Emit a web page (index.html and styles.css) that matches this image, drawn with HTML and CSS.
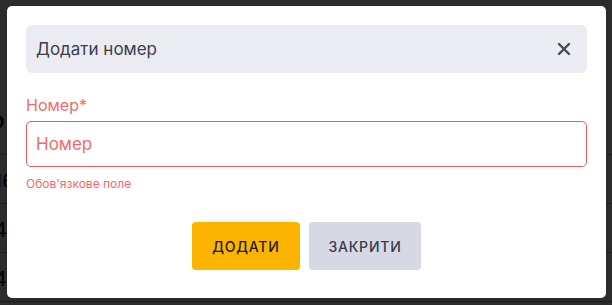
FILE: index.html
```html
<!DOCTYPE html>
<html lang="uk">
<head>
    <meta charset="UTF-8">
    <meta name="viewport" content="width=device-width, initial-scale=1.0">
    <title>Додати номер</title>
    <link rel="stylesheet" href="styles.css">
</head>
<body>

    <!-- Page behind the dialog -->
    <div class="page">
        <div class="page-row page-row-title">Ф</div>
        <div class="page-row">16</div>
        <div class="page-row">4</div>
        <div class="page-row">4</div>
    </div>

    <!-- Dialog -->
    <div class="overlay">
        <div class="modal">
            <div class="modal-header">
                <span class="modal-title">Додати номер</span>
                <button class="modal-close" aria-label="Закрити">
                    <svg width="14" height="14" viewBox="0 0 14 14">
                        <path d="M2 2 L12 12 M12 2 L2 12" stroke="#464a5a" stroke-width="2.4" stroke-linecap="round"/>
                    </svg>
                </button>
            </div>

            <form class="modal-form">
                <label class="field-label" for="number">Номер*</label>
                <input id="number" class="field-input" type="text" placeholder="Номер">
                <div class="field-error">Обов'язкове поле</div>

                <div class="modal-actions">
                    <button type="button" class="btn btn-primary">Додати</button>
                    <button type="button" class="btn btn-secondary">Закрити</button>
                </div>
            </form>
        </div>
    </div>

</body>
</html>
```

FILE: styles.css
```css
* {
    margin: 0;
    padding: 0;
    box-sizing: border-box;
}

body {
    font-family: 'Inter', 'Noto Sans', sans-serif;
    background: #fff;
    width: 612px;
    height: 305px;
    overflow: hidden;
}

/* Page behind */
.page {
    padding-top: 96px;
}

.page-row {
    height: 49px;
    padding: 14px 0 0 0;
    border-bottom: 1px solid #aaa;
    font-size: 20px;
    color: #000;
    text-indent: -6px;
}

.page-row-title {
    height: 59px;
    font-weight: bold;
    text-indent: -12px;
}

/* Overlay + Dialog */
.overlay {
    position: fixed;
    inset: 0;
    background: rgba(0, 0, 0, 0.83);
    padding: 6px 0 0 7px;
}

.modal {
    width: 599px;
    height: 292px;
    background: #fff;
    border-radius: 5px;
    padding: 19px;
}

.modal-header {
    display: flex;
    align-items: center;
    justify-content: space-between;
    height: 48px;
    background: #ebecf1;
    border-radius: 6px;
    padding: 0 16px 0 10px;
}

.modal-title {
    font-size: 17px;
    color: #3b3e4b;
}

.modal-close {
    border: none;
    background: none;
    display: flex;
    cursor: pointer;
}

.modal-form {
    display: flex;
    flex-direction: column;
}

.field-label {
    margin-top: 22px;
    font-size: 16px;
    line-height: 20px;
    color: #f26b6b;
}

.field-input {
    margin-top: 6px;
    height: 46px;
    border: 1px solid #ee5a5a;
    border-radius: 5px;
    padding: 0 9px;
    font-family: inherit;
    font-size: 17px;
    outline: none;
}

.field-input::placeholder {
    color: #f06b6b;
}

.field-error {
    margin-top: 9px;
    font-size: 12px;
    line-height: 16px;
    color: #f06b6b;
}

.modal-actions {
    display: flex;
    justify-content: center;
    gap: 9px;
    margin-top: 30px;
}

.btn {
    height: 48px;
    border: none;
    border-radius: 4px;
    font-family: inherit;
    font-size: 14px;
    font-weight: 500;
    letter-spacing: 0.8px;
    text-transform: uppercase;
    cursor: pointer;
}

.btn-primary {
    width: 108px;
    background: #fbb400;
    color: #1b1b1b;
}

.btn-secondary {
    width: 112px;
    background: #d6d8e3;
    color: #383b48;
}
```
